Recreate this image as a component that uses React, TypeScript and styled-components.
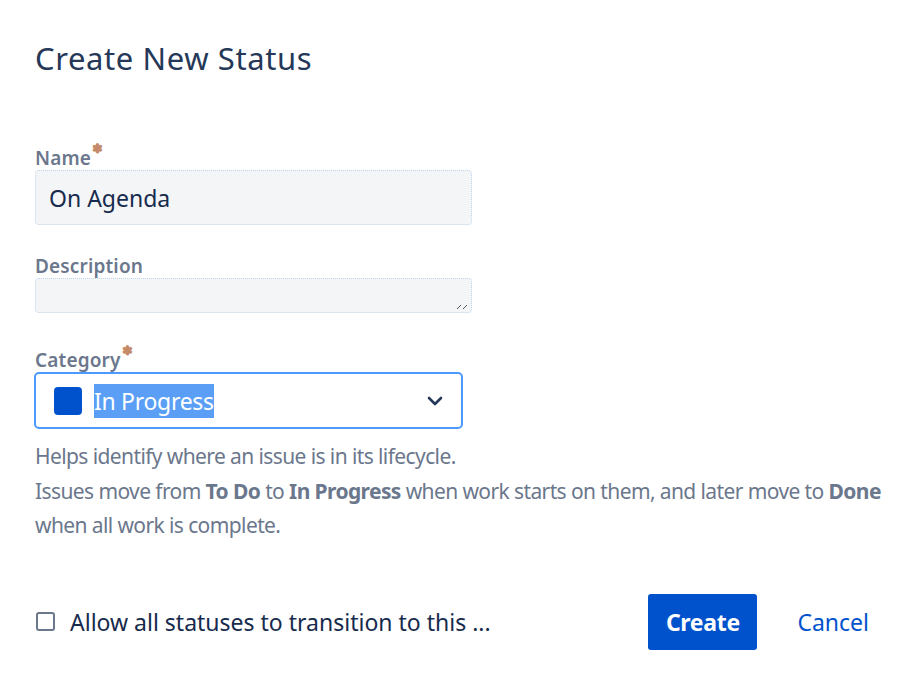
import React from "react";
import styled, { createGlobalStyle } from "styled-components";

const Global = createGlobalStyle`
  html, body { margin: 0; padding: 0; background: #ffffff; }
  body { font-family: "Noto Sans", "Open Sans", sans-serif; color: #172B4D; }
  ::selection { background: #5a9ff5; color: #fff; }
`;

const Dialog = styled.div`
  width: 912px;
  height: 685px;
  box-sizing: border-box;
  padding: 36px 43px 0 35px;
  display: flex;
  flex-direction: column;
`;

const Title = styled.h1`
  margin: 0;
  font-size: 31px;
  font-weight: 400;
  line-height: 44px;
  color: #253858;
  letter-spacing: 0.6px;
`;

const Field = styled.div<{ $top: number }>`
  display: flex;
  flex-direction: column;
  margin-top: ${(p) => p.$top}px;
`;

const Label = styled.label`
  font-size: 19px;
  font-weight: 600;
  color: #6B778C;
  line-height: 24px;
  letter-spacing: 0.15px;
  display: flex;
  align-items: flex-start;
`;

const Req = styled.span`
  color: #C58A68;
  font-size: 13px;
  line-height: 12px;
  margin-left: 1px;
  margin-top: -4px;
`;

const TextBox = styled.div<{ $h: number }>`
  width: 437px;
  height: ${(p) => p.$h}px;
  box-sizing: border-box;
  background: #F4F5F7;
  border: 1px dotted #BFD6EC;
  border-radius: 4px;
  display: flex;
  align-items: center;
  padding: 0 13px;
  font-size: 23px;
  color: #172B4D;
  position: relative;
`;

const Resize = styled.svg`
  position: absolute;
  right: 4px;
  bottom: 3px;
`;

const Select = styled.div`
  width: 429px;
  height: 57px;
  box-sizing: border-box;
  border: 2px solid #4C9AFF;
  border-radius: 5px;
  background: #fff;
  display: flex;
  align-items: center;
  padding: 0 18px 0 18px;
  margin-left: -1px;
`;

const Swatch = styled.span`
  width: 28px;
  height: 28px;
  border-radius: 4px;
  background: #0052CC;
  flex: none;
`;

const Selected = styled.span`
  margin-left: 12px;
  background: #5a9ff5;
  color: #fff;
  font-size: 23px;
  line-height: 34px;
  letter-spacing: -0.3px;
  flex: none;
`;

const Chevron = styled.svg`
  margin-left: auto;
`;

const Help = styled.div`
  margin-top: 10px;
  font-size: 21px;
  line-height: 34.5px;
  color: #6B778C;
  letter-spacing: -0.6px;
  width: 870px;
  b { font-weight: 700; }
`;

const Footer = styled.div`
  display: flex;
  align-items: center;
  margin-top: 51px;
`;

const CheckLabel = styled.label`
  display: flex;
  align-items: center;
  flex: 1;
  font-size: 23px;
  color: #172B4D;
  letter-spacing: 0px;
`;

const Box = styled.span`
  width: 19px;
  height: 19px;
  box-sizing: border-box;
  border: 2px solid #6B778C;
  border-radius: 3px;
  margin: 0 15px 0 1px;
`;

const Primary = styled.button`
  width: 109px;
  height: 56px;
  border: none;
  border-radius: 3px;
  background: #0052CC;
  color: #fff;
  font-family: inherit;
  font-size: 23px;
  font-weight: 700;
  letter-spacing: -0.3px;
`;

const Link = styled.button`
  border: none;
  background: none;
  color: #0052CC;
  font-family: inherit;
  font-size: 23px;
  margin-left: 40px;
  padding: 0;
  letter-spacing: 0px;
`;

export default function App() {
  return (
    <Dialog>
      <Global />
      <Title>Create New Status</Title>
      <Field $top={66}>
        <Label>Name<Req>✽</Req></Label>
        <TextBox $h={55}>On Agenda</TextBox>
      </Field>
      <Field $top={29}>
        <Label>Description</Label>
        <TextBox $h={35}>
          <Resize width="10" height="6" viewBox="0 0 10 6">
            <path d="M0 6 L4 2 M6 6 L10 2" stroke="#555" strokeWidth="1" />
          </Resize>
        </TextBox>
      </Field>
      <Field $top={35}>
        <Label>Category<Req>✽</Req></Label>
        <Select>
          <Swatch />
          <Selected>In Progress</Selected>
          <Chevron width="16" height="10" viewBox="0 0 16 10">
            <path d="M2 2 L8 8 L14 2" fill="none" stroke="#253858" strokeWidth="2.6" strokeLinecap="round" strokeLinejoin="round" />
          </Chevron>
        </Select>
      </Field>
      <Help>
        Helps identify where an issue is in its lifecycle.
        <br />
        Issues move from <b>To Do</b> to <b>In Progress</b> when work starts on them, and later move to <b>Done</b>
        <br />
        when all work is complete.
      </Help>
      <Footer>
        <CheckLabel>
          <Box />
          Allow all statuses to transition to this ...
        </CheckLabel>
        <Primary>Create</Primary>
        <Link>Cancel</Link>
      </Footer>
    </Dialog>
  );
}
